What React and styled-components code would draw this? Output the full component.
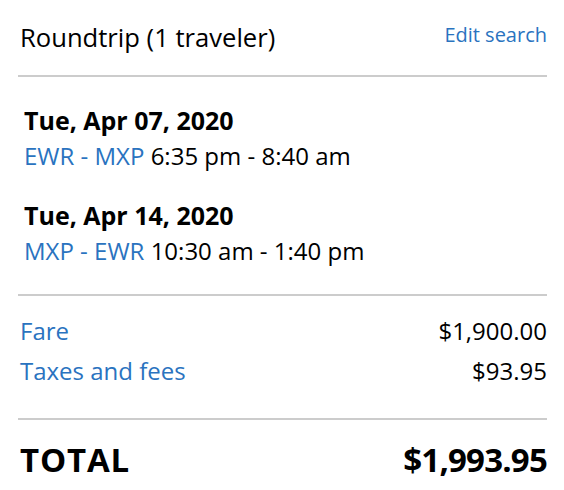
import React from 'react';
import styled, { createGlobalStyle } from 'styled-components';

const GlobalStyle = createGlobalStyle`
  body {
    margin: 0;
    background: #fff;
    font-family: "Open Sans", "Liberation Sans", sans-serif;
    color: #000;
  }
`;

const flights = [
  { date: 'Tue, Apr 07, 2020', route: 'EWR - MXP', times: '6:35 pm - 8:40 am' },
  { date: 'Tue, Apr 14, 2020', route: 'MXP - EWR', times: '10:30 am - 1:40 pm' },
];

const charges = [
  { name: 'Fare', amount: '$1,900.00' },
  { name: 'Taxes and fees', amount: '$93.95' },
];

const App = () => {
  return (
    <>
      <GlobalStyle />
      <Summary>
        <Header>
          <Title>Roundtrip (1 traveler)</Title>
          <EditLink href="#">Edit search</EditLink>
        </Header>
        <Flights>
          {
            flights.map((flight) => (
              <Flight key={flight.date}>
                <FlightDate>{ flight.date }</FlightDate>
                <FlightLine>
                  <Route>{ flight.route }</Route> { flight.times }
                </FlightLine>
              </Flight>
            ))
          }
        </Flights>
        <Charges>
          {
            charges.map((charge) => (
              <ChargeRow key={charge.name}>
                <ChargeName>{ charge.name }</ChargeName>
                <span>{ charge.amount }</span>
              </ChargeRow>
            ))
          }
        </Charges>
        <TotalRow>
          <TotalLabel>TOTAL</TotalLabel>
          <TotalAmount>$1,993.95</TotalAmount>
        </TotalRow>
      </Summary>
    </>
  );
}

const Summary = styled.div`
  padding: 0 17px 0 18px;
`;

const Header = styled.div`
  display: flex;
  justify-content: space-between;
  align-items: flex-start;
  padding: 22px 0 21px 2px;
  border-bottom: 2px solid #cccccc;
`;

const Title = styled.span`
  font-size: 25.6px;
  line-height: 32px;
`;

const EditLink = styled.a`
  font-size: 20px;
  line-height: 26px;
  color: #2a73bf;
  text-decoration: none;
`;

const Flights = styled.div`
  display: flex;
  flex-direction: column;
  gap: 24px;
  padding: 26px 0 25px 6px;
  border-bottom: 2px solid #cccccc;
`;

const Flight = styled.div`
  display: flex;
  flex-direction: column;
`;

const FlightDate = styled.div`
  font-size: 25px;
  font-weight: 700;
  line-height: 35px;
`;

const FlightLine = styled.div`
  font-size: 24px;
  line-height: 36px;
`;

const Route = styled.span`
  color: #2a73bf;
`;

const Charges = styled.div`
  display: flex;
  flex-direction: column;
  padding: 15px 0 27px 2px;
  border-bottom: 2px solid #cccccc;
`;

const ChargeRow = styled.div`
  display: flex;
  justify-content: space-between;
  font-size: 24px;
  line-height: 40px;
`;

const ChargeName = styled.span`
  color: #2a73bf;
`;

const TotalRow = styled.div`
  display: flex;
  justify-content: space-between;
  padding: 18px 0 0 2px;
  font-size: 33px;
  font-weight: 700;
  line-height: 44px;
`;

const TotalLabel = styled.span`
  letter-spacing: 0.8px;
`;

const TotalAmount = styled.span`
  letter-spacing: -0.8px;
`;

export default App;
